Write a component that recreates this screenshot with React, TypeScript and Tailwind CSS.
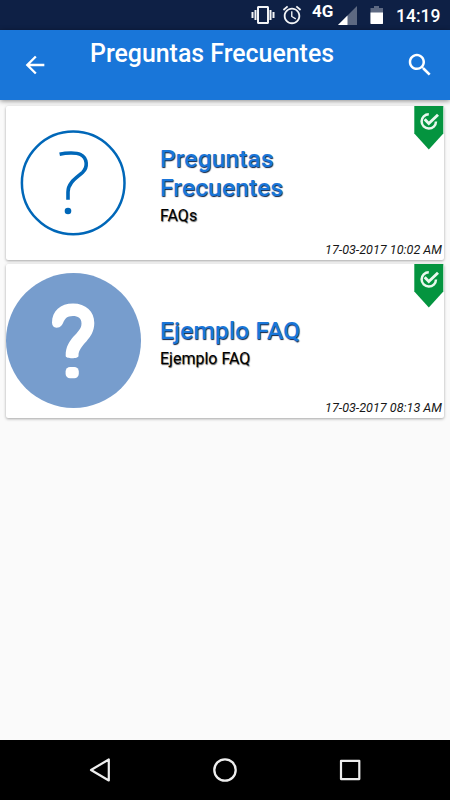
import type { ReactNode } from "react";

const items = [
  {
    id: 1,
    title: "Preguntas Frecuentes",
    subtitle: "FAQs",
    date: "17-03-2017 10:02 AM",
    icon: <OutlineQuestion />,
  },
  {
    id: 2,
    title: "Ejemplo FAQ",
    subtitle: "Ejemplo FAQ",
    date: "17-03-2017 08:13 AM",
    icon: <SolidQuestion />,
  },
];

function OutlineQuestion() {
  return (
    <svg viewBox="0 0 135 135" className="size-[135px]" fill="none" stroke="#0067b8">
      <circle cx="67.2" cy="67.9" r="51.3" strokeWidth="2.5" />
      <path
        d="M53.6 39.2C60 37.8 70 37.2 74.5 39.5C81.5 43 82 52.500 76.500 57.500C69.500 63.500 62 68 62 77V84.800"
        strokeWidth="3.600"
      />
      <circle cx="62" cy="96" r="3.300" fill="#0067b8" stroke="none" />
    </svg>
  );
}

function SolidQuestion() {
  return (
    <svg viewBox="0 0 135 135" className="size-[135px]">
      <circle cx="67.5" cy="67.5" r="67.5" fill="#779dcd" />
      <path
        d="M46 49.500C46 38 54.500 30.500 67 30.500C80 30.500 88.300 38.500 88.300 50C88.300 67 72.500 71 72.500 83C72.500 86 59.700 86 59.700 83C59.700 64 75.500 61 75.500 50.500C75.500 45 72 43 67 43C54.500 43 60 54.700 50.500 54.700C47.500 54.700 46 52.500 46 49.500Z"
        fill="#fff"
      />
      <rect x="59.600" y="94" width="13.200" height="11.200" rx="4.500" fill="#fff" />
    </svg>
  );
}

function CheckRibbon() {
  return (
    <svg viewBox="0 0 30 44" className="absolute right-0 top-0 h-[44px] w-[30px]" fill="none">
      <path d="M0.300 0H29.300V27.500L14.800 43.500L0.300 27.500Z" fill="#04943f" />
      <path d="M14.800 8.200A7.200 7.200 0 1 0 22 15.500" stroke="#e9f8ee" strokeWidth="2.500" />
      <path d="M10.700 13.300L14.800 17.500L24 8.800" stroke="#e9f8ee" strokeWidth="2.900" />
    </svg>
  );
}

function StatusBar() {
  return (
    <div className="flex h-[30px] items-start bg-[#0e2045] text-white">
      <svg viewBox="0 0 24 24" className="ml-[251px] mt-[3px] size-6 shrink-0" fill="#f1f3f6">
        <path d="M0.500 15h2V9h-2v6zm3 2h2V7h-2v10zm18-8v6h2V9h-2zm-3 8h2V7h-2v10zM16.500 3h-9C6.670 3 6 3.670 6 4.500v15c0 .83.67 1.500 1.500 1.500h9c.83 0 1.500-.67 1.500-1.500v-15c0-.83-.67-1.500-1.500-1.500zM16 19H8V5h8v14z" />
      </svg>
      <svg viewBox="0 0 24 24" className="ml-[6px] mt-[4px] size-[22px] shrink-0" fill="#f1f3f6">
        <path d="M22 5.720l-4.600-3.860-1.290 1.530 4.600 3.860L22 5.720zM7.880 3.390L6.600 1.860 2 5.710l1.290 1.530 4.590-3.850zM12.500 8H11v6l4.750 2.850.75-1.230-4-2.370V8zM12 4c-4.970 0-9 4.030-9 9s4.020 9 9 9c4.970 0 9-4.030 9-9s-4.030-9-9-9zm0 16c-3.870 0-7-3.130-7-7s3.130-7 7-7 7 3.130 7 7-3.130 7-7 7z" />
      </svg>
      <span className="ml-[9px] mt-[1px] w-6 text-[17px] font-bold leading-5">4G</span>
      <svg viewBox="0 0 20 20" className="ml-[2px] mt-[5px] size-5 shrink-0">
        <path d="M0 20L19 1V20Z" fill="#5d6982" />
        <path d="M0 20L9.500 10.500V20Z" fill="#fff" />
      </svg>
      <svg viewBox="0 0 14 20" className="ml-[12px] mt-[5px] h-5 w-[14px] shrink-0">
        <path d="M4 1H9V3H13V19H0.500V3H4Z" fill="#5d6982" />
        <path d="M0.500 7.500H13V18.300Q13 19 12.300 19H1.200Q0.500 19 0.500 18.300Z" fill="#fff" />
      </svg>
      <span className="ml-[12px] mt-[6px] whitespace-nowrap text-[17.5px] font-medium leading-5">14:19</span>
    </div>
  );
}

function AppBar() {
  return (
    <header className="relative flex h-[70px] bg-[#1976d9] text-white shadow-[0_1px_5px_rgba(0,0,0,0.45)]">
      <button aria-label="Volver" className="ml-[21px] mt-[21px] size-7">
        <svg viewBox="0 0 24 24" fill="currentColor">
          <path d="M20 11H7.830l5.590-5.590L12 4l-8 8 8 8 1.410-1.410L7.830 13H20v-2z" />
        </svg>
      </button>
      <h1 className="ml-[41px] mt-[9px] w-[250px] whitespace-nowrap text-[24.9px] font-medium leading-[30px]">
        Preguntas Frecuentes
      </h1>
      <button aria-label="Buscar" className="ml-[65px] mt-[20px] size-[30px]">
        <svg viewBox="0 0 24 24" fill="currentColor">
          <path d="M15.500 14h-.79l-.28-.27C15.410 12.590 16 11.110 16 9.500 16 5.910 13.090 3 9.500 3S3 5.910 3 9.500 5.910 16 9.500 16c1.610 0 3.090-.59 4.230-1.570l.27.28v.79l5 4.990L20.490 19l-4.990-5zm-6 0C7.010 14 5 11.990 5 9.500S7.010 5 9.500 5 14 7.010 14 9.500 11.990 14 9.500 14z" />
        </svg>
      </button>
    </header>
  );
}

type FaqCardProps = {
  title: string;
  subtitle: string;
  date: string;
  icon: ReactNode;
};

function FaqCard({ title, subtitle, date, icon }: FaqCardProps) {
  return (
    <article className="relative flex h-[154px] rounded-[2px] bg-white shadow-[0_1px_3px_rgba(0,0,0,0.35)]">
      <div className="mt-[9px] w-[154px] shrink-0">{icon}</div>
      <div className="flex h-[154px] w-[150px] flex-col justify-center pt-[5px]">
        <h2 className="text-[24.8px] font-medium leading-[29px] text-[#1976d9] [text-shadow:0.5px_0.5px_1px_#124]">
          {title}
        </h2>
        <p className="pt-px text-[16px] leading-[25px] text-black [text-shadow:0.5px_0.5px_1px_#555]">{subtitle}</p>
      </div>
      <time className="ml-auto mr-[2px] self-end whitespace-nowrap text-[12.6px] italic leading-[21px] text-[#171717]">
        {date}
      </time>
      <CheckRibbon />
    </article>
  );
}

function NavigationBar() {
  return (
    <nav className="flex h-[60px] items-center justify-center gap-[101px] bg-black">
      <svg viewBox="0 0 24 24" className="size-6" fill="none" stroke="#eee" strokeWidth="2.200" strokeLinejoin="round">
        <path d="M20.800 1.500V22.500L3 12Z" />
      </svg>
      <svg viewBox="0 0 24 24" className="size-6" fill="none" stroke="#eee" strokeWidth="2.300">
        <circle cx="12" cy="12" r="10.700" />
      </svg>
      <svg viewBox="0 0 24 24" className="size-6" fill="none" stroke="#eee" strokeWidth="2.200" strokeLinejoin="round">
        <rect x="3" y="2.800" width="18.300" height="18.300" />
      </svg>
    </nav>
  );
}

export default function App() {
  return (
    <div className="flex h-[800px] w-[450px] flex-col overflow-hidden bg-[#fafafa] font-['Roboto',sans-serif]">
      <StatusBar />
      <AppBar />
      <main className="flex flex-1 flex-col gap-1 px-[6px] pt-[6px]">
        {items.map((item) => (
          <FaqCard key={item.id} title={item.title} subtitle={item.subtitle} date={item.date} icon={item.icon} />
        ))}
      </main>
      <NavigationBar />
    </div>
  );
}
